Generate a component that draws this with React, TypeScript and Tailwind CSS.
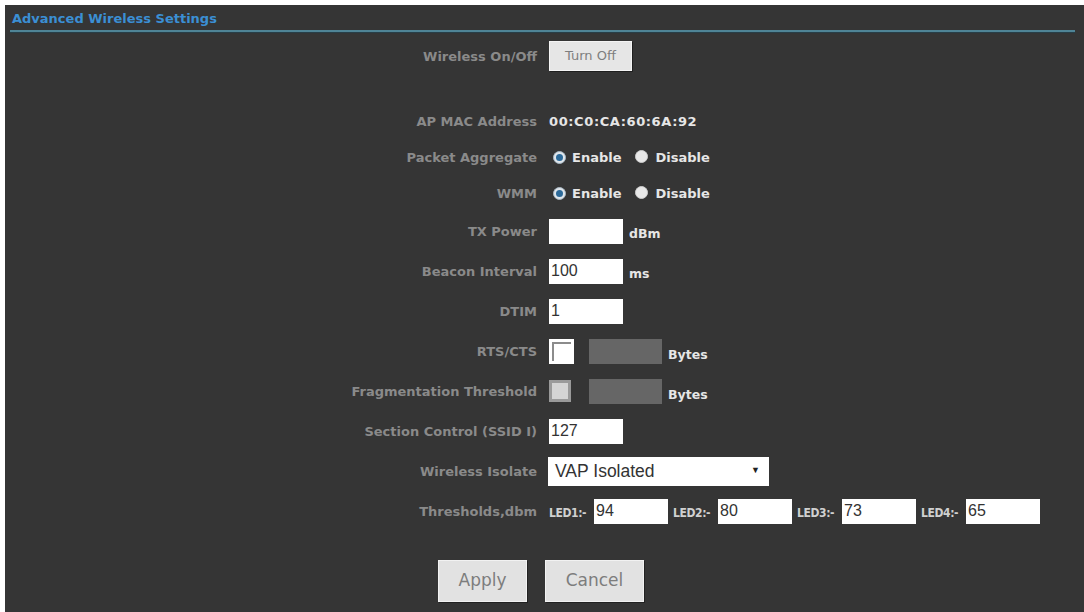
import React from "react";

const labelCls =
  "w-[532px] shrink-0 text-right text-[13px] font-bold text-[#8a8a8a] [font-family:'DejaVu_Sans',sans-serif] leading-none";

function Row({ label, h, children }: { label: string; h: string; children?: React.ReactNode }) {
  return (
    <div className={`flex items-center ${h}`}>
      <div className={labelCls}>{label}</div>
      <div className="ml-[12px] flex items-center">{children}</div>
    </div>
  );
}

function Radio({ checked }: { checked: boolean }) {
  return checked ? (
    <span className="w-[13px] h-[13px] rounded-full bg-[#dfe6ec] border border-[#a9b8c4] flex items-center justify-center">
      <span className="block w-[7px] h-[7px] rounded-full bg-[#2c6a9a]" />
    </span>
  ) : (
    <span className="inline-block w-[13px] h-[13px] rounded-full bg-[#e8e8e8] border border-[#cfcfcf]" />
  );
}

function TextBox({ value, w = "w-[74px]" }: { value?: string; w?: string }) {
  return (
    <div
      className={`${w} h-[25px] bg-white flex items-center pl-[2px] text-[16px] text-[#333] [font-family:'Liberation_Sans',sans-serif] leading-none`}
    >
      {value}
    </div>
  );
}

const valCls = "text-[13px] font-bold text-[#e6e6e6] [font-family:'DejaVu_Sans',sans-serif] leading-none";
const unitCls = "text-[12.5px] font-bold text-[#e6e6e6] [font-family:'DejaVu_Sans',sans-serif] leading-none";

function RadioPair() {
  return (
    <>
      <span className="ml-[4px]">
        <Radio checked />
      </span>
      <span className={`${valCls} ml-[6px]`}>Enable</span>
      <span className="ml-[13px]">
        <Radio checked={false} />
      </span>
      <span className={`${valCls} ml-[8px]`}>Disable</span>
    </>
  );
}

export default function App() {
  return (
    <div className="w-[1084px] h-[612px] bg-white pt-[5px] pl-[5px] overflow-hidden">
      <div className="w-[1079px] h-[607px] bg-[#353535] flex flex-col">
        <div className="pl-[7px] pt-[7px] h-[25px] text-[13px] font-bold text-[#3b8fd4] [font-family:'DejaVu_Sans',sans-serif] leading-none">
          Advanced Wireless Settings
        </div>
        <div className="ml-[5px] w-[1065px] h-[2px] bg-[#4f8496] shadow-[0_1px_1px_#27404a]" />
        <div className="mt-[9px]">
          <Row label="Wireless On/Off" h="h-[30px]">
            <button className="w-[83px] h-[30px] bg-[#e6e6e6] border border-[#f4f4f4] shadow-[1px_1px_0_#1f1f1f] text-[13px] text-[#7e7e7e] [font-family:'DejaVu_Sans',sans-serif]">
              Turn Off
            </button>
          </Row>
        </div>
        <div className="mt-[32px]">
          <Row label="AP MAC Address" h="h-[36px]">
            <span className={`${valCls} tracking-[0.6px]`}>00:C0:CA:60:6A:92</span>
          </Row>
          <Row label="Packet Aggregate" h="h-[36px]">
            <RadioPair />
          </Row>
          <Row label="WMM" h="h-[36px]">
            <RadioPair />
          </Row>
          <Row label="TX Power" h="h-[40px]">
            <TextBox />
            <span className={`${unitCls} ml-[6px] mt-[6px]`}>dBm</span>
          </Row>
          <Row label="Beacon Interval" h="h-[40px]">
            <TextBox value="100" />
            <span className={`${unitCls} ml-[6px] mt-[6px]`}>ms</span>
          </Row>
          <Row label="DTIM" h="h-[40px]">
            <TextBox value="1" />
          </Row>
          <Row label="RTS/CTS" h="h-[40px]">
            <div className="w-[25px] h-[25px] bg-white p-[3px]">
              <div className="w-full h-full border-l-2 border-t-2 border-[#8c8c8c]" />
            </div>
            <div className="ml-[15px] w-[73px] h-[25px] bg-[#666]" />
            <span className={`${unitCls} ml-[6px] mt-[8px]`}>Bytes</span>
          </Row>
          <Row label="Fragmentation Threshold" h="h-[40px]">
            <div className="w-[22px] h-[22px] bg-[#9a9a9a] p-[3px]">
              <div className="w-full h-full bg-[#d4d4d4]" />
            </div>
            <div className="ml-[18px] w-[73px] h-[25px] bg-[#666]" />
            <span className={`${unitCls} ml-[6px] mt-[8px]`}>Bytes</span>
          </Row>
          <Row label="Section Control (SSID I)" h="h-[40px]">
            <TextBox value="127" />
          </Row>
          <Row label="Wireless Isolate" h="h-[40px]">
            <div className="-ml-[1px] w-[221px] h-[29px] bg-white flex items-center justify-between pl-[7px] pr-[9px] text-[17.5px] text-[#333] [font-family:'Liberation_Sans',sans-serif]">
              <span>VAP Isolated</span>
              <span className="text-[9px] text-[#222]">▼</span>
            </div>
          </Row>
          <Row label="Thresholds,dbm" h="h-[40px]">
            {[
              ["LED1:-", "94"],
              ["LED2:-", "80"],
              ["LED3:-", "73"],
              ["LED4:-", "65"],
            ].map(([l, v], i) => (
              <div key={l} className={`flex items-center ${i > 0 ? "ml-[5px]" : ""}`}>
                <span className="w-[45px] text-[12px] font-bold text-[#d0d0d0] tracking-[-0.4px] [font-family:'DejaVu_Sans_Condensed','DejaVu_Sans',sans-serif] mt-[4px] leading-none">
                  {l}
                </span>
                <TextBox value={v} />
              </div>
            ))}
          </Row>
        </div>
        <div className="mt-[29px] flex pl-[433px] gap-[18px]">
          <button className="w-[89px] h-[42px] bg-[#e2e2e2] border border-[#f2f2f2] shadow-[1px_1px_0_#222] text-[17px] text-[#7d7d7d] [font-family:'DejaVu_Sans',sans-serif]">
            Apply
          </button>
          <button className="w-[99px] h-[42px] bg-[#e2e2e2] border border-[#f2f2f2] shadow-[1px_1px_0_#222] text-[17px] text-[#7d7d7d] [font-family:'DejaVu_Sans',sans-serif]">
            Cancel
          </button>
        </div>
      </div>
    </div>
  );
}
